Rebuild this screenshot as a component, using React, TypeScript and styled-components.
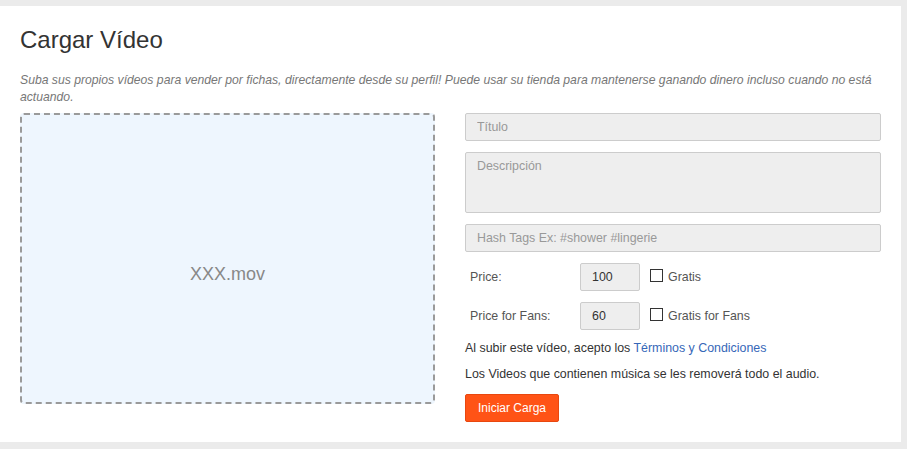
import React from "react";
import styled, { createGlobalStyle } from "styled-components";

const GlobalStyle = createGlobalStyle`
  html, body {
    margin: 0;
    padding: 0;
    background: #ebebeb;
  }
  body {
    font-family: "Liberation Sans", Arial, sans-serif;
  }
`;

const Page = styled.div`
  padding: 6px 6px 0 0;
`;

const Panel = styled.section`
  background: #fff;
  height: 436px;
  box-sizing: border-box;
  padding: 20px 20px 0;
`;

const Title = styled.h2`
  margin: 0;
  font-size: 24px;
  font-weight: normal;
  line-height: 27px;
  color: #333;
`;

const Intro = styled.p`
  margin: 19px 0 7px;
  font-size: 12.2px;
  font-style: italic;
  line-height: 17px;
  color: #777;
`;

const Body = styled.div`
  display: grid;
  grid-template-columns: 415px 1fr;
  gap: 30px;
`;

const Dropzone = styled.div`
  height: 291px;
  box-sizing: border-box;
  padding-top: 32px;
  border: 2px dashed #9a9a9a;
  border-radius: 4px;
  background: #eef6fe;
  display: flex;
  align-items: center;
  justify-content: center;
  font-size: 18px;
  color: #888;
`;

const Form = styled.form`
  display: flex;
  flex-direction: column;
  gap: 11px;
`;

const Field = styled.input`
  height: 28px;
  box-sizing: border-box;
  border: 1px solid #ccc;
  border-radius: 2px;
  background: #eee;
  padding: 0 11px;
  font-family: inherit;
  font-size: 12.4px;
  color: #333;
  outline: none;
  &::placeholder {
    color: #999;
  }
`;

const Area = styled.textarea`
  height: 61px;
  box-sizing: border-box;
  border: 1px solid #ccc;
  border-radius: 2px;
  background: #eee;
  padding: 6px 11px;
  font-family: inherit;
  font-size: 12.4px;
  color: #333;
  resize: none;
  outline: none;
  &::placeholder {
    color: #999;
  }
`;

const PriceRow = styled.div`
  display: flex;
  align-items: center;
  height: 28px;
  font-size: 12.4px;
  color: #555;
`;

const PriceLabel = styled.label`
  width: 115px;
  padding-left: 5px;
  box-sizing: border-box;
`;

const PriceInput = styled(Field)`
  width: 60px;
`;

const Check = styled.input`
  appearance: none;
  width: 13px;
  height: 13px;
  margin: -4px 5px 0 10px;
  border: 1px solid #333;
  border-radius: 0;
  background: #fff;
`;

const Notice = styled.p`
  margin: 0;
  font-size: 12.4px;
  line-height: 15px;
  color: #333;
`;

const Link = styled.a`
  color: #3567b8;
  text-decoration: none;
`;

const Button = styled.button`
  align-self: flex-start;
  height: 28px;
  margin-top: 1px;
  padding: 0 12px;
  background: #ff5316;
  border: 1px solid #e8470f;
  border-radius: 2px;
  color: #fff;
  font-family: inherit;
  font-size: 12px;
`;

const prices = [
  { label: "Price:", value: "100", free: "Gratis" },
  { label: "Price for Fans:", value: "60", free: "Gratis for Fans" },
];

export default function App() {
  return (
    <Page>
      <GlobalStyle />
      <Panel>
        <Title>Cargar Vídeo</Title>
        <Intro>
          Suba sus propios vídeos para vender por fichas, directamente desde su perfil! Puede
          usar su tienda para mantenerse ganando dinero incluso cuando no está actuando.
        </Intro>
        <Body>
          <Dropzone>XXX.mov</Dropzone>
          <Form onSubmit={(e) => e.preventDefault()}>
            <Field placeholder="Título" />
            <Area placeholder="Descripción" />
            <Field placeholder="Hash Tags Ex: #shower #lingerie" />
            {prices.map((p) => (
              <PriceRow key={p.label}>
                <PriceLabel>{p.label}</PriceLabel>
                <PriceInput defaultValue={p.value} />
                <Check type="checkbox" />
                <span>{p.free}</span>
              </PriceRow>
            ))}
            <Notice>
              Al subir este vídeo, acepto los <Link href="#">Términos y Condiciones</Link>
            </Notice>
            <Notice>Los Videos que contienen música se les removerá todo el audio.</Notice>
            <Button type="submit">Iniciar Carga</Button>
          </Form>
        </Body>
      </Panel>
    </Page>
  );
}
